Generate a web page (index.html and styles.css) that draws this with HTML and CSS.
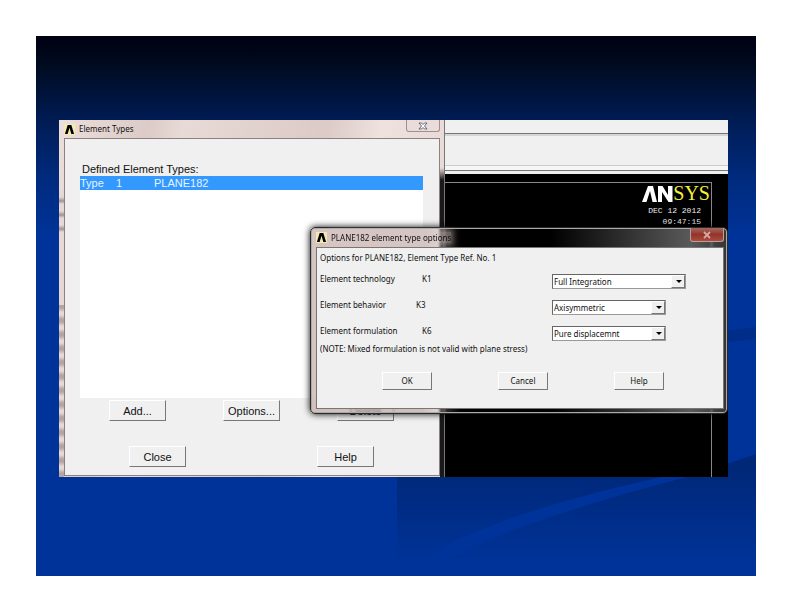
FILE: index.html
```html
<!DOCTYPE html>
<html lang="en">
<head>
<meta charset="utf-8">
<title>Element Types</title>
<link rel="stylesheet" href="styles.css">
</head>
<body>
<main class="slide">
  <svg class="swoosh" viewBox="0 0 720 540" preserveAspectRatio="none" aria-hidden="true">
    <defs>
      <linearGradient id="shade" gradientUnits="userSpaceOnUse" x1="0" y1="430" x2="0" y2="530">
        <stop offset="0" stop-color="#002878"/>
        <stop offset="0.5" stop-color="#002d88"/>
        <stop offset="1" stop-color="#003399"/>
      </linearGradient>
    </defs>
    <path d="M361 430H685L720 418V540H361Z" fill="url(#shade)"/>
    <path d="M630 440C540 460 450 485 390 520L400 530C450 502 520 475 655 440Z" fill="#003399"/>
    <path d="M690 295L720 291V303L690 306Z" fill="#002d88"/>
  </svg>
  <section class="desktop">
    <form class="window types">
      <header class="titlebar">
        <svg class="logo" viewBox="0 0 12 12" aria-hidden="true"><rect width="12" height="12" fill="#f4e9b0"/><path d="M1 11L4 1H8L11 11H8L6 4L4 11Z" fill="#000"/></svg>
        <h1 class="title">Element Types</h1>
        <button type="button" class="close" aria-label="Close window"><svg viewBox="0 0 10 8" aria-hidden="true"><path d="M1 1H3.500L5 2.500L6.500 1H9L6.500 4L9 7H6.500L5 5.500L3.500 7H1L3.500 4Z" fill="#fff" stroke="#555b6c" stroke-width=".9"/></svg></button>
      </header>
      <div class="client">
        <label class="list-label" for="types">Defined Element Types:</label>
        <div class="list" id="types" role="listbox" tabindex="0">
          <div class="row" role="option" aria-selected="true"><span>Type</span><span>1</span><span>PLANE182</span></div>
        </div>
        <div class="actions three">
          <button type="button" class="btn">Add...</button>
          <button type="button" class="btn">Options...</button>
          <button type="button" class="btn">Delete</button>
        </div>
        <div class="actions two">
          <button type="button" class="btn">Close</button>
          <button type="button" class="btn">Help</button>
        </div>
      </div>
    </form>
    <section class="app">
      <div class="menubar"></div>
      <div class="toolbar"></div>
      <div class="divider"></div>
      <div class="graphics">
        <div class="frame">
          <div class="brand"><svg class="brand-mark" viewBox="0 0 31 16" aria-hidden="true"><path d="M0 16L6 0H11L15 16H10.500L8 5L4.500 16ZM16 16V0H20.500L26 9V0H30.500V16H26.500L20 6V16Z" fill="#fff"/></svg><span>SYS</span></div>
          <p class="stamp">DEC 12 2012<br>09:47:15</p>
        </div>
      </div>
    </section>
    <form class="window options">
      <header class="titlebar">
        <svg class="logo" viewBox="0 0 12 12" aria-hidden="true"><rect width="12" height="12" fill="#f4e9b0"/><path d="M1 11L4 1H8L11 11H8L6 4L4 11Z" fill="#000"/></svg>
        <h2 class="title"><span class="glow">PLANE182 element type options</span></h2>
        <button type="button" class="close red" aria-label="Close dialog"><svg viewBox="0 0 10 8" aria-hidden="true"><path d="M2 1L8 7M8 1L2 7" stroke="#d9a8a2" stroke-width="1.800"/></svg></button>
      </header>
      <div class="client">
        <p class="intro">Options for PLANE182, Element Type Ref. No. 1</p>
        <div class="fields">
          <div class="field"><label for="k1">Element technology</label><span class="key">K1</span><span class="pick wide"><select id="k1"><option>Full Integration</option></select></span></div>
          <div class="field"><label for="k3">Element behavior</label><span class="key near">K3</span><span class="pick"><select id="k3"><option>Axisymmetric</option></select></span></div>
          <div class="field"><label for="k6">Element formulation</label><span class="key">K6</span><span class="pick"><select id="k6"><option>Pure displacemnt</option></select></span></div>
        </div>
        <p class="note">(NOTE: Mixed formulation is not valid with plane stress)</p>
        <div class="dialog-actions">
          <button type="button" class="btn">OK</button>
          <button type="button" class="btn">Cancel</button>
          <button type="button" class="btn">Help</button>
        </div>
      </div>
    </form>
  </section>
</main>
</body>
</html>
```

FILE: styles.css
```css
* { box-sizing: border-box; }
body { margin: 0; padding: 36px; background: #fff; color: #111; font-family: "Liberation Sans", Arial, sans-serif; }
h1, h2, p { margin: 0; font-weight: normal; }
button, select { font: inherit; color: inherit; }

.slide {
  position: relative;
  min-height: calc(100vh - 72px);
  padding: 84px 28px 99px 23px;
  background: linear-gradient(#000012 0, #000b20 30px, #001c54 84px, #002a7c 140px, #003399 200px);
}
.swoosh { position: absolute; inset: 0; width: 100%; height: 100%; }
.desktop { position: relative; display: grid; grid-template-columns: 386fr 283fr; min-height: 357px; overflow: hidden; }

.window { display: flex; flex-direction: column; }
.titlebar { display: flex; align-items: center; }
.logo { width: 11px; height: 11px; }
.title { flex: 1; font-family: "Noto Sans", sans-serif; font-size: 8px; line-height: 12px; }
.close { display: flex; align-self: flex-start; justify-content: center; align-items: center; width: 34px; height: 12px; padding: 0; border: 1px solid #a08f8f; border-top: 0; border-radius: 0 0 3px 3px; background: #eadcda; }
.close svg { width: 10px; height: 8px; }
.close.red { height: 14px; border-color: #b5a09d; background: linear-gradient(#a8685f, #90352a 50%, #b04a3c); }
.btn { padding: 0; border: 1px solid; border-color: #fff #777 #777 #fff; background: #f0f0f0; }

/* Glass frame: mottled left edge, dark right edge where it overlaps the graphics area */
.types {
  padding: 0 4px 1px 5px;
  border-right: 1px solid #777;
  background:
    linear-gradient(transparent 48px, #1a1a1c 60px) right / 4px 100% no-repeat,
    repeating-linear-gradient(#b5a4a2 0, #b5a4a2 3px, #e6d8d5 7px, #e6d8d5 10px, #b5a4a2 14px) 0 185px / 5px 172px no-repeat,
    repeating-linear-gradient(#e6d8d5 0, #e6d8d5 7px, #a39390 11px, #e6d8d5 14px) 0 70px / 5px 42px no-repeat,
    linear-gradient(100deg, #ecdeda 0, #dccbc7 20%, #e8dad6 28%, #dccac6 60%, #eee1de 72%, #e4d5d1 100%);
}
.types .titlebar { height: 18px; gap: 4px; }
.types .client { flex: 1; padding: 23px 16px 8px 15px; border: 1px solid #8d8080; background: #f0f0f0; }
.list-label { display: block; padding-left: 2px; font-size: 11px; line-height: 14px; }
.list { height: 222px; background: #fff; font-size: 11px; line-height: 14px; }
.row { display: grid; grid-template-columns: 36px 38px 1fr; background: #3399ff; color: #e8f4ff; }
.actions { display: flex; justify-content: space-between; font-size: 11px; }
.actions .btn { width: 57px; height: 21px; }
.three { padding: 2px 29px 0; }
.two { padding: 25px 49px 0; }

.app { display: flex; flex-direction: column; background: #f0f0f0; }
.menubar { height: 14px; border-bottom: 1px solid #777; }
.toolbar { height: 32px; border-top: 2px solid #d4d4d4; border-bottom: 1px solid #ccc; }
.divider { height: 8px; padding: 4px 0; background: linear-gradient(#f6f6f6 4px, #777 4px, #777 5px, #f0f0f0 5px); }
.graphics { flex: 1; display: flex; padding: 8px 16px 0 0; background: #000; }
.frame { flex: 1; padding: 1px 1px 0; border: 1px solid #888; border-bottom: 0; border-left: 0; }
.brand { display: flex; align-items: center; justify-content: flex-end; height: 19px; color: #f4f03c; font-family: "Liberation Serif", serif; font-size: 20px; line-height: 19px; }
.brand-mark { width: 31px; height: 16px; }
.stamp { padding: 2px 9px 0 0; color: #eee; font-family: "Liberation Mono", monospace; font-size: 8px; line-height: 11px; text-align: right; }

.options {
  position: absolute; top: 107px; left: 251px; right: 0;
  padding: 0 3px 4px 5px;
  border: 1px solid #29292a; border-radius: 5px;
  background: linear-gradient(90deg, rgba(200, 176, 172, .75) 0, rgba(190, 165, 160, .65) 110px, transparent 150px, transparent 240px, rgba(150, 150, 150, .6) 380px, rgba(130, 130, 130, .4) 100%);
  backdrop-filter: blur(1px);
  box-shadow: 0 0 7px #000, inset 0 0 0 1px #aaa;
  font-family: "Noto Sans", sans-serif; font-size: 8px; line-height: 12px;
}
.options .titlebar { height: 19px; gap: 4px; }
.glow { background: rgba(215, 200, 197, .4); box-shadow: 0 0 5px 2px rgba(215, 200, 197, .4); }
.options .client { padding: 4px 4px 18px 3px; border: 1px solid #777; background: #f0f0f0; }
.fields { display: grid; gap: 5px; padding-top: 4px; }
.field { display: flex; height: 21px; }
.field label { width: 102px; padding-top: 5px; }
.key { flex: 1; padding-top: 5px; }
.key.near { margin-left: -6px; }
.pick { position: relative; width: 114px; height: 15px; margin: 6px 53px 0 0; }
.pick.wide { width: 134px; margin-right: 33px; }
.pick select {
  display: block; width: 100%; height: 100%; padding: 0 1px;
  border: 1px solid; border-color: #666 #999 #999 #666; border-radius: 0; appearance: none; background: #fff;
}
.pick::after {
  content: ""; position: absolute; top: 1px; right: 1px; bottom: 1px; width: 12px;
  border: 1px solid; border-color: #fff #777 #777 #fff; background: #f0f0f0; pointer-events: none;
}
.pick::before {
  content: ""; position: absolute; z-index: 1; top: 6px; right: 4px;
  border: 3px solid transparent; border-top-color: #000; border-bottom: 0; pointer-events: none;
}
.note { padding-top: 2px; }
.dialog-actions { display: flex; justify-content: space-between; padding: 17px 55px 0 62px; }
.dialog-actions .btn { width: 50px; height: 18px; }
```
